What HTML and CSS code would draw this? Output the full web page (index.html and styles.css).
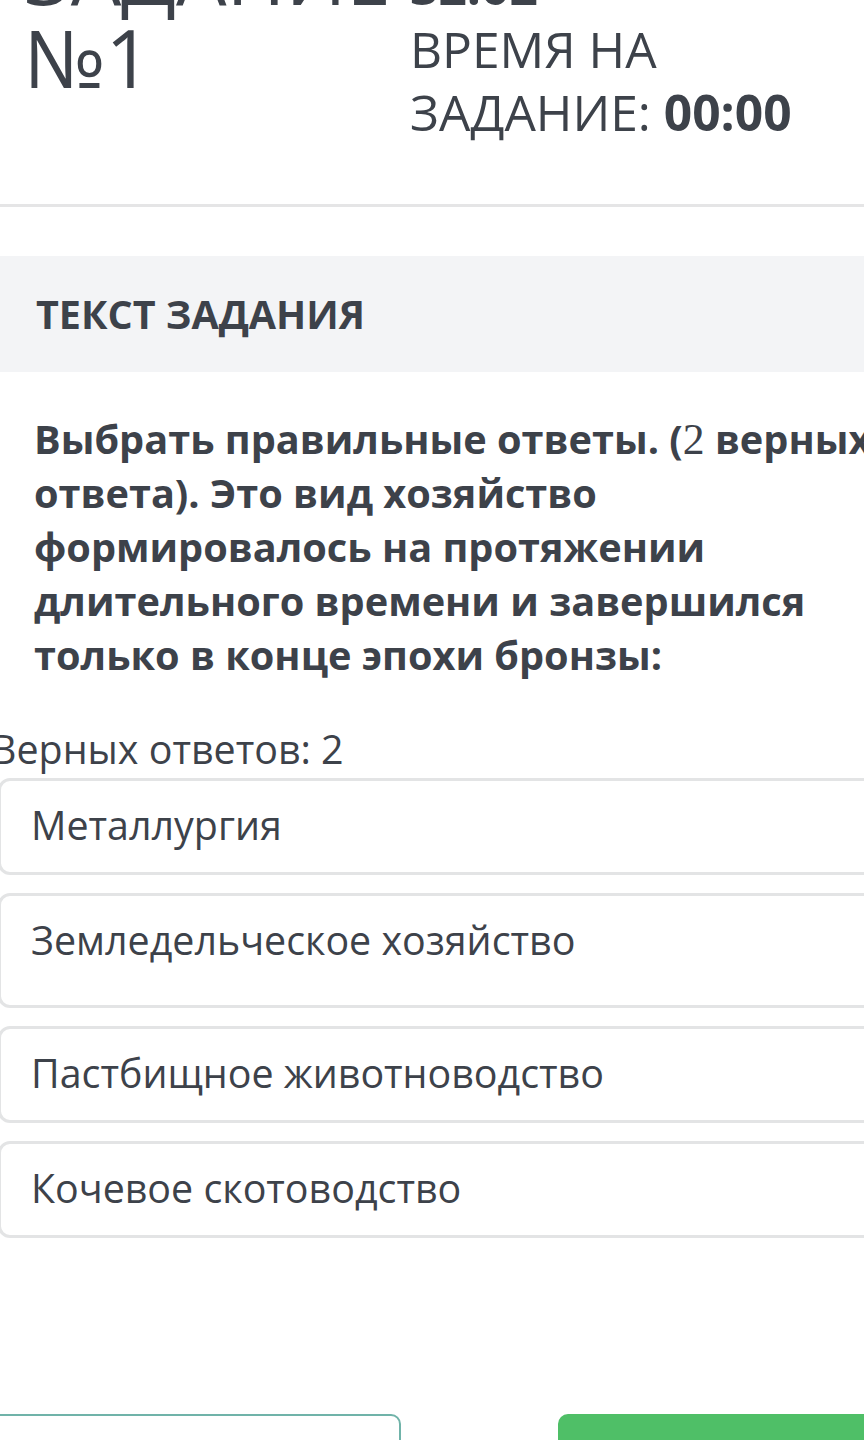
FILE: index.html
```html
<!DOCTYPE html>
<html lang="ru">
<head>
  <meta charset="UTF-8" />
  <meta name="viewport" content="width=device-width, initial-scale=1.0" />
  <title>Задание №1</title>
  <link rel="stylesheet" href="styles.css">
</head>
<body>
<div class="page">

  <div class="task-head">
    <h1 class="task-title">ЗАДАНИЕ<br>№1</h1>
    <div class="timer">
      <p><b>32:02</b></p>
      <p>ВРЕМЯ НА<br>ЗАДАНИЕ: <b>00:00</b></p>
    </div>
  </div>

  <div class="band">ТЕКСТ ЗАДАНИЯ</div>

  <p class="question">
    Выбрать правильные ответы. (<span class="math">2</span> верных ответа). Это вид хозяйство
    формировалось на протяжении длительного времени и завершился только в конце эпохи бронзы:
  </p>

  <div class="answers">
    <div class="answers-count">Верных ответов: 2</div>
    <div class="option">Металлургия</div>
    <div class="option option-tall">Земледельческое хозяйство</div>
    <div class="option">Пастбищное животноводство</div>
    <div class="option">Кочевое скотоводство</div>
  </div>

  <div class="actions">
    <button class="btn btn-outline">Назад</button>
    <button class="btn btn-green">Ответить</button>
  </div>

</div>
</body>
</html>
```

FILE: styles.css
```css
html, body { overflow: hidden; }
body { margin: 0; background: #fff; color: #3d424a; font-family: "Open Sans", "Noto Sans", sans-serif; }
.page { width: 940px; }

.task-head { display: flex; margin-top: -68px; padding: 0 0 60px 24px; border-bottom: 3px solid #e5e5e6; }
.task-title { width: 386px; margin: 0; font-size: 80px; line-height: 83px; font-weight: 400; }
.timer { width: 460px; padding-top: 23px; font-size: 49.7px; line-height: 63px; }
.timer p { margin: 0; }
.timer b { font-weight: 700; }

.band { margin-top: 49px; height: 116px; display: flex; align-items: center; padding-left: 36px; background: #f3f4f6; font-size: 39.5px; font-weight: 700; }

.question { margin: 40px 0 0 34px; width: 862px; font-size: 39.7px; line-height: 54px; font-weight: 700; }
.math { font-family: "Liberation Serif", "DejaVu Serif", serif; font-size: 1.1em; font-weight: 400; line-height: 1; }

.answers { margin: 40px 0 0 -9px; font-size: 39.4px; line-height: 54px; }
.answers-count { margin-bottom: 2px; }
.option { margin: 0 0 18px 7px; padding: 17px 30px 20px; border: 3px solid #e3e4e5; border-radius: 12px; }
.option-tall { padding-bottom: 38px; }

.actions { display: flex; gap: 157px; margin: 176px 0 0 -10px; }
.btn { flex-shrink: 0; height: 80px; border-radius: 10px; font-family: inherit; font-size: 40px; color: transparent; cursor: pointer; }
.btn-outline { width: 411px; background: #fff; border: 2px solid #70b3a9; }
.btn-green { width: 420px; background: #4fbf67; border: 0; }
```
